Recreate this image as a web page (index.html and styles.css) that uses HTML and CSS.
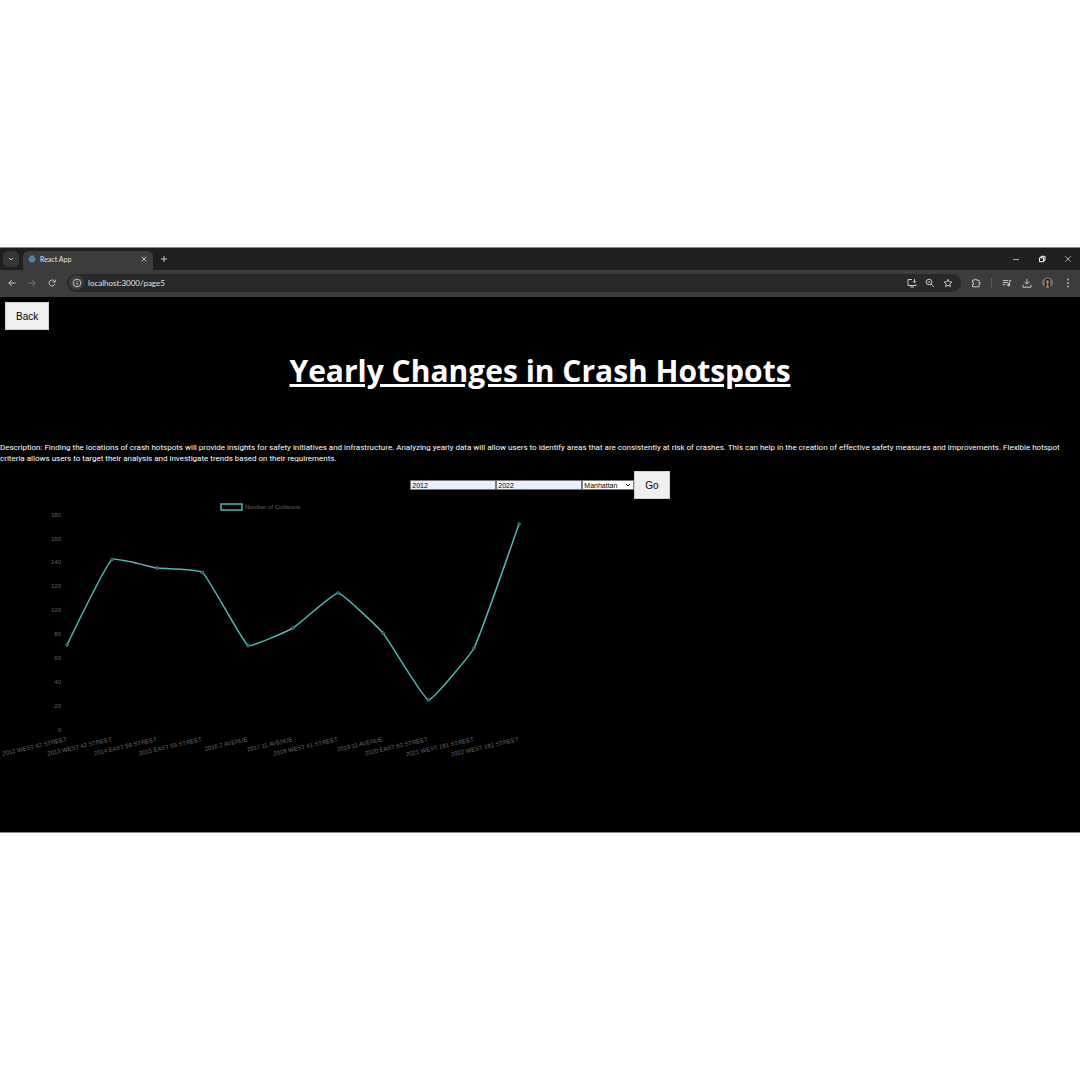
FILE: index.html
```html
<!DOCTYPE html>
<html lang="en">
<head>
<meta charset="utf-8">
<meta name="viewport" content="width=device-width, initial-scale=1">
<title>React App</title>
<link rel="stylesheet" href="styles.css">
</head>
<body>
<div class="window">
  <header class="browser">
    <div class="tabstrip">
      <button class="tab-search" type="button" aria-label="Search tabs">
        <svg class="icon-small" viewBox="0 0 8 8"><path d="M2 3l2 2 2-2"/></svg>
      </button>
      <div class="tab">
        <svg class="favicon" viewBox="0 0 24 24"><g fill="none" stroke="#4fb4d0" stroke-width="2"><ellipse cx="12" cy="12" rx="11" ry="4.3"/><ellipse cx="12" cy="12" rx="11" ry="4.3" transform="rotate(60 12 12)"/><ellipse cx="12" cy="12" rx="11" ry="4.3" transform="rotate(120 12 12)"/></g><circle cx="12" cy="12" r="2.4" fill="#4fb4d0"/></svg>
        <span class="tab-title">React App</span>
        <button class="plain" type="button" aria-label="Close tab"><svg class="icon-small" viewBox="0 0 8 8"><path d="M1.8 1.8l4.4 4.4M6.2 1.8L1.8 6.2"/></svg></button>
      </div>
      <button class="plain new-tab" type="button" aria-label="New tab"><svg class="icon-small" viewBox="0 0 8 8"><path d="M4 1v6M1 4h6"/></svg></button>
      <div class="window-controls">
        <button class="plain" type="button" aria-label="Minimize"><svg class="icon-small" viewBox="0 0 8 8"><path d="M1 4.5h6" stroke-width=".8"/></svg></button>
        <button class="plain" type="button" aria-label="Restore"><svg class="icon-small bright" viewBox="0 0 8 8"><path d="M1.5 2.8h4v4h-4zM3 2.6V1.3h4v4H5.7"/></svg></button>
        <button class="plain" type="button" aria-label="Close"><svg class="icon-small" viewBox="0 0 8 8"><path d="M1.2 1.2l5.6 5.6M6.8 1.2L1.2 6.8" stroke-width=".8"/></svg></button>
      </div>
    </div>
    <div class="toolbar">
      <nav class="nav-buttons" aria-label="Browser">
        <button class="plain" type="button" aria-label="Go back"><svg class="icon" viewBox="0 0 10 10"><path d="M8.5 5H1.8M4.8 2L1.8 5l3 3"/></svg></button>
        <button class="plain dim" type="button" aria-label="Go forward"><svg class="icon" viewBox="0 0 10 10"><path d="M1.5 5h6.7M5.2 2l3 3-3 3"/></svg></button>
        <button class="plain" type="button" aria-label="Reload"><svg class="icon" viewBox="0 0 10 10"><path d="M7.9 6A3 3 0 1 1 7.4 3.1L8 3.8M8.2 1.6v2.5H5.7"/></svg></button>
      </nav>
      <div class="omnibox">
        <button class="site-info" type="button" aria-label="Site information"><svg class="icon" viewBox="0 0 10 10"><circle cx="5" cy="5" r="3.8"/><path d="M5 4.6V7M5 2.8v.9"/></svg></button>
        <input class="url" type="text" value="localhost:3000/page5" aria-label="Address">
        <button class="plain" type="button" aria-label="Install app"><svg class="icon" viewBox="0 0 10 10"><path d="M5 1.5H1v6h8V6.3M3.2 9h3.6M7.5 1v3.6M5.9 3.2l1.6 1.6 1.6-1.6"/></svg></button>
        <button class="plain" type="button" aria-label="Zoom"><svg class="icon" viewBox="0 0 10 10"><circle cx="4" cy="4" r="2.8"/><path d="M6.1 6.1L9 9M2.9 4h2.2"/></svg></button>
        <button class="plain" type="button" aria-label="Bookmark"><svg class="icon" viewBox="0 0 10 10"><path d="M5 1.2l1.1 2.6 2.8.2-2.1 1.9.6 2.8L5 7.2 2.6 8.7l.6-2.8L1.1 4l2.8-.2z"/></svg></button>
      </div>
      <button class="plain" type="button" aria-label="Extensions"><svg class="icon" viewBox="0 0 10 10"><path d="M1.5 2.2h2.2V1.2h1.8v1h2.6v2.4h.9v1.6h-.9v2.6H1.5V6.5l1-.2V4.6l-1-.2z"/></svg></button>
      <span class="divider"></span>
      <button class="plain" type="button" aria-label="Media controls"><svg class="icon" viewBox="0 0 10 10"><path d="M.8 2.6h5.4M.8 4.6h5.4M.8 6.6h2.8M7.6 6.8V2.6h1.8"/><circle cx="6.6" cy="6.9" r="1" fill="#c7c7c7"/></svg></button>
      <button class="plain" type="button" aria-label="Downloads"><svg class="icon" viewBox="0 0 10 10"><path d="M5 .8v5M2.6 3.8L5 6.2l2.4-2.4M1 6.8v2.4h8V6.8"/></svg></button>
      <button class="plain" type="button" aria-label="Profile"><svg class="avatar" viewBox="0 0 12 12"><circle cx="6" cy="6" r="5.8" fill="#77777a"/><path d="M3 11V4.5a3 3 0 0 1 6 0V11a6 6 0 0 1-6 0z" fill="#211c1d"/><ellipse cx="6" cy="5.4" rx="1.5" ry="2.1" fill="#b98468"/><path d="M5 8h2l.5 3.6h-3z" fill="#b98468"/></svg></button>
      <button class="plain" type="button" aria-label="Menu"><svg class="icon" viewBox="0 0 10 10"><g fill="#c7c7c7" stroke="none"><circle cx="5" cy="1.5" r=".9"/><circle cx="5" cy="5" r=".9"/><circle cx="5" cy="8.5" r=".9"/></g></svg></button>
    </div>
  </header>
  <main class="page">
    <button class="button back" type="button">Back</button>
    <h1 class="title">Yearly Changes in Crash Hotspots</h1>
    <p class="description">Description: Finding the locations of crash hotspots will provide insights for safety initiatives and infrastructure. Analyzing yearly data will allow users to identify areas that are consistently at risk of crashes. This can help in the creation of effective safety measures and improvements. Flexible hotspot criteria allows users to target their analysis and investigate trends based on their requirements.</p>
    <form class="filters">
      <input class="field" type="text" value="2012" aria-label="Start year">
      <input class="field" type="text" value="2022" aria-label="End year">
      <span class="select">
        <select class="borough" aria-label="Borough">
          <option>Manhattan</option>
        </select>
        <svg class="chevron" viewBox="0 0 6 6"><path d="M1 2l2 2 2-2"/></svg>
      </span>
      <button class="button" type="button">Go</button>
    </form>
    <svg class="chart" viewBox="0 0 540 270" role="img" aria-label="Number of collisions by year">
      <rect class="line" x="221" y="5" width="21" height="6"/>
      <text class="label" x="245" y="10">Number of Collisions</text>
      <g class="label end">
        <text x="61" y="18">180</text>
        <text x="61" y="42">160</text>
        <text x="61" y="65">140</text>
        <text x="61" y="89">120</text>
        <text x="61" y="113">100</text>
        <text x="61" y="137">80</text>
        <text x="61" y="161">60</text>
        <text x="61" y="185">40</text>
        <text x="61" y="209">20</text>
        <text x="61" y="233">0</text>
      </g>
      <path class="line" d="M67 146C67 146 105.9 65.7 112 60.5C114.9 58 152.5 68.4 157 69C161.5 69.6 199.3 70.3 202.5 73.5C208.4 78 242.2 142.4 248 146.5C251.3 148.5 288.9 131.4 293 129C297.9 126.2 333.6 93.8 338 94C342.6 94.2 379.1 129.4 383 134C388.2 140.1 423.6 200.2 428.5 201C432.7 201.7 470.9 155 474 149C480 137.4 519 25 519 25"/>
      <g class="point">
        <circle cx="67" cy="146" r="1.5"/><circle cx="112" cy="60.5" r="1.5"/><circle cx="157" cy="69" r="1.5"/><circle cx="202.5" cy="73.5" r="1.5"/><circle cx="248" cy="146.5" r="1.5"/><circle cx="293" cy="129" r="1.5"/><circle cx="338" cy="94" r="1.5"/><circle cx="383" cy="134" r="1.5"/><circle cx="428.5" cy="201" r="1.5"/><circle cx="474" cy="149" r="1.5"/><circle cx="519" cy="25" r="1.5"/>
      </g>
      <g class="label end">
        <text transform="translate(67 242) rotate(-13)">2012 WEST 42 STREET</text>
        <text transform="translate(112 242) rotate(-13)">2013 WEST 42 STREET</text>
        <text transform="translate(157 242) rotate(-13)">2014 EAST 59 STREET</text>
        <text transform="translate(202 242) rotate(-13)">2015 EAST 59 STREET</text>
        <text transform="translate(248 242) rotate(-13)">2016 2 AVENUE</text>
        <text transform="translate(293 242) rotate(-13)">2017 11 AVENUE</text>
        <text transform="translate(338 242) rotate(-13)">2018 WEST 41 STREET</text>
        <text transform="translate(383 242) rotate(-13)">2019 11 AVENUE</text>
        <text transform="translate(428 242) rotate(-13)">2020 EAST 63 STREET</text>
        <text transform="translate(474 242) rotate(-13)">2021 WEST 181 STREET</text>
        <text transform="translate(519 242) rotate(-13)">2022 WEST 181 STREET</text>
      </g>
    </svg>
  </main>
</div>
</body>
</html>
```
FILE: styles.css
```css
* { box-sizing: border-box; }

body {
  margin: 0;
  min-height: 100vh;
  display: flex;
  flex-direction: column;
  justify-content: center;
  background: #fff;
  font-family: Lato, sans-serif;
  font-size: 8px;
  color: #fff;
}

.window {
  border-top: 1px solid #8a8a8a;
  border-bottom: 1px solid #8a8a8a;
}

button, input, select { margin: 0; border-radius: 0; }

/* Browser frame */
.tabstrip {
  display: flex;
  align-items: center;
  height: 22px;
  padding: 0 8px 0 3px;
  background: #1f1f1f;
}

.plain, .tab-search, .site-info {
  display: flex;
  align-items: center;
  justify-content: center;
  padding: 0;
  border: 0;
  background: none;
}

.tab-search {
  width: 16px;
  height: 16px;
  border-radius: 5px;
  background: #363636;
}

.icon, .icon-small {
  display: block;
  fill: none;
  stroke: #c7c7c7;
  stroke-width: 1;
}

.icon { width: 10px; height: 10px; }
.icon-small { width: 8px; height: 8px; }
.bright { stroke: #fff; }
.dim .icon { stroke: #777; }

.tab {
  display: flex;
  align-items: center;
  align-self: flex-end;
  gap: 4px;
  width: 130px;
  height: 19px;
  margin-left: 4px;
  padding: 0 5px 3px;
  border-radius: 6px 6px 0 0;
  background: #3c3c3c;
}

.favicon { width: 8px; height: 8px; }
.tab-title { flex: 1; font-size: 7px; color: #e3e3e3; }
.new-tab { margin-left: 7px; }

.window-controls {
  display: flex;
  gap: 18px;
  margin-left: auto;
}

.toolbar {
  display: flex;
  align-items: center;
  gap: 10px;
  height: 27px;
  padding: 0 7px 2px;
  background: #3c3c3c;
}

.nav-buttons { display: flex; gap: 10px; }

.omnibox {
  flex: 1;
  display: flex;
  align-items: center;
  gap: 8px;
  height: 18px;
  padding: 0 8px 0 2px;
  border-radius: 9px;
  background: #282828;
}

.site-info {
  width: 15px;
  height: 15px;
  border-radius: 50%;
  background: #3c3c3c;
}

.url {
  flex: 1;
  min-width: 0;
  margin-left: -4px;
  padding: 0;
  border: 0;
  background: none;
  color: #e3e3e3;
  font: 8px Lato, sans-serif;
}

.divider { width: 1px; height: 10px; background: #5c5c5c; }
.avatar { display: block; width: 11px; height: 11px; }

/* Page */
.page {
  display: flex;
  flex-direction: column;
  background: #000;
  padding-bottom: 63px;
}

.button {
  height: 28px;
  padding: 0 10px;
  border: 1px solid #d0d0d0;
  background: #efefef;
  color: #000;
  font: 10px "Liberation Sans", Arial, sans-serif;
}

.back { align-self: flex-start; margin: 5px; }

.title {
  margin: 14px 0 49px;
  font: bold 30px/44px "Open Sans", sans-serif;
  text-align: center;
  text-decoration: underline;
}

.description {
  margin: 0;
  padding-right: 16px;
  font-family: Roboto, sans-serif;
  line-height: 11px;
}

.filters {
  display: flex;
  align-items: center;
  justify-content: center;
  margin-top: 7px;
}

.field, .borough {
  border: 1px solid #767676;
  color: #000;
  font: 7px "Liberation Sans", Arial, sans-serif;
}

.field {
  width: 86px;
  height: 10px;
  padding: 0 1px;
  background: #e8f0fe;
}

.select { position: relative; display: flex; }

.borough {
  width: 52px;
  height: 10px;
  padding: 0 1px;
  appearance: none;
  background: #fff;
}

.chevron {
  position: absolute;
  top: 2px;
  right: 3px;
  width: 6px;
  height: 6px;
  fill: none;
  stroke: #000;
  stroke-width: 1;
  pointer-events: none;
}

/* Chart */
.chart { display: block; width: 50%; }
.line { fill: none; stroke: #50b8b4; stroke-width: 1.5; }
.point { fill: #1e4c4c; stroke: #50b8b4; stroke-width: .5; }
.label { fill: #666; font: 6px "Liberation Sans", Arial, sans-serif; }
.end { text-anchor: end; }
```
